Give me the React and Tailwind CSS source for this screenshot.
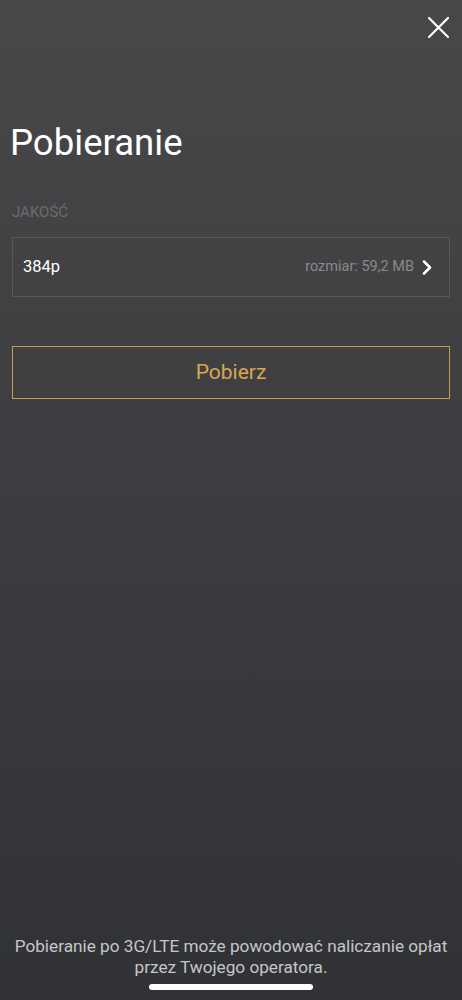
import React from "react";

export default function App() {
  return (
    <div
      className="h-[1000px] w-full flex flex-col bg-gradient-to-b from-[#48484a] to-[#313236] text-white"
      style={{ fontFamily: "Roboto, 'Noto Sans', sans-serif" }}
    >
      <div className="flex justify-end pt-[17px] pr-[13px]">
        <svg width="21" height="21" viewBox="0 0 21 21" fill="none">
          <path d="M1 1L20 20M20 1L1 20" stroke="white" strokeWidth="2.2" strokeLinecap="round" />
        </svg>
      </div>

      <h1 className="mt-[84px] pl-[10px] text-[36.6px] leading-[42px] font-normal text-white">Pobieranie</h1>

      <div className="mt-[39px] pl-[12px] text-[15px] leading-[18px] text-[#6b6b6d]">JAKOŚĆ</div>

      <div className="mx-[12px] mt-[16px] h-[60px] border border-[#58585b] flex items-center pl-[10px] pr-[16px]">
        <span className="text-[16.5px] text-white">384p</span>
        <span className="ml-auto text-[14.5px] text-[#8a8a8c]">rozmiar: 59,2 MB</span>
        <svg className="ml-[8px]" width="11" height="15" viewBox="0 0 11 15" fill="none">
          <path d="M2 1.5L8 7.5L2 13.5" stroke="white" strokeWidth="2.5" strokeLinecap="round" strokeLinejoin="round" />
        </svg>
      </div>

      <button className="mx-[12px] mt-[49px] h-[53px] border-[1.5px] border-[#c59c55] flex items-center justify-center text-[21px] text-[#dba552]">
        Pobierz
      </button>

      <div className="mt-auto flex flex-col items-center pb-[10px]">
        <p className="px-[8px] text-center text-[17.2px] leading-[21px] text-[#c6c6c8]">
          Pobieranie po 3G/LTE może powodować naliczanie opłat przez Twojego operatora.
        </p>
        <div className="mt-[6px] h-[6px] w-[164px] rounded-full bg-white" />
      </div>
    </div>
  );
}
